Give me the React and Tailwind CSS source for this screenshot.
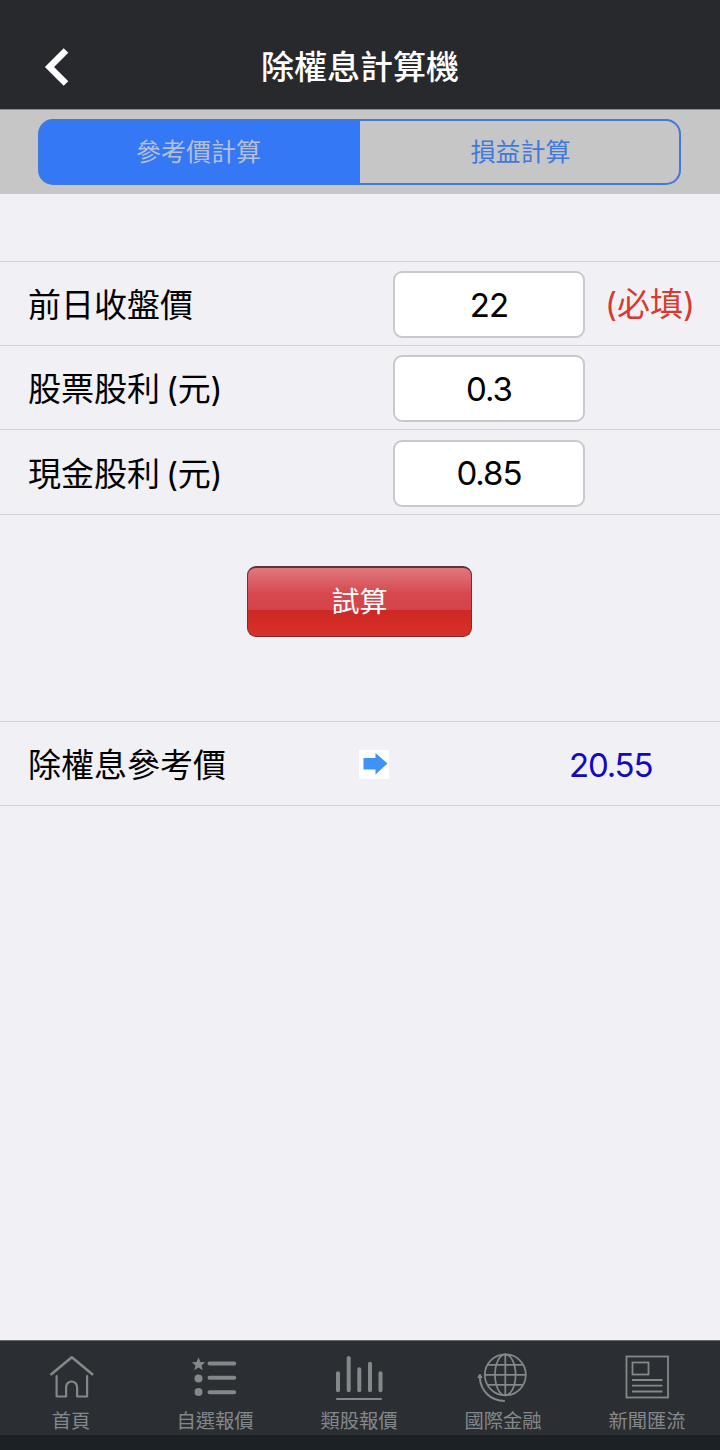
import React, { useState } from 'react';

const HomeIcon = () => (
  <svg width="48" height="48" viewBox="-1 0 48 48" fill="none" stroke="#85888a" strokeLinecap="round" strokeLinejoin="round">
    <path d="M3.500 22.300 24 5.200 44.500 22.300" strokeWidth="2.500" transform="translate(-.2 0)" />
    <path d="M9 24V44.500H18.500V35a5.500 5.500 0 0 1 11 0V44.500H39.500V24" strokeWidth="2.200" transform="translate(-.4 0)" />
  </svg>
);

const WatchlistIcon = () => (
  <svg width="48" height="48" viewBox="0 0 48 48" fill="#85888a">
    <path d="M7.500 5.200 9.400 9.900 14.200 10.300 10.500 13.500 11.700 18.200 7.500 15.600 3.300 18.200 4.500 13.500 .8 10.300 5.600 9.900Z" />
    <circle cx="7.500" cy="26.500" r="4" />
    <circle cx="7.500" cy="40" r="4" />
    <path d="M18.500 11.500H43.200M18.500 25.800H43.200M18.500 40.300H43.200" stroke="#85888a" strokeWidth="4" strokeLinecap="round" />
  </svg>
);

const SectorIcon = () => (
  <svg width="48" height="48" viewBox="0 0 48 48" fill="none" stroke="#85888a" strokeLinecap="round">
    <path d="M3 21.300V38.200M13.700 6V38.200M24.300 17.300V38.200M35 11.700V38.200M45.500 21.300V38.200" strokeWidth="4" />
    <path d="M2 47H46" strokeWidth="2" />
  </svg>
);

const GlobeIcon = () => (
  <svg width="52" height="52" viewBox="0.7 0 52 52" fill="none" stroke="#85888a" strokeWidth="1.700">
    <circle cx="29" cy="24.800" r="20.500" />
    <ellipse cx="29" cy="24.800" rx="10.300" ry="20.500" />
    <path d="M29 4.300V45.300M8.500 24.800H49.500M11.500 14.800H46.500M11.500 34.800H46.500" />
    <path d="M3.500 27.500C4.500 41 14 51 28.500 51" strokeWidth="2" />
    <path d="M1.500 27.500 3.500 24 5.800 27.500Z" fill="#85888a" strokeWidth="1" />
  </svg>
);

const NewsIcon = () => (
  <svg width="48" height="48" viewBox="0 0 48 48" fill="none" stroke="#85888a" strokeWidth="1.800">
    <rect x="3.500" y="4.500" width="41.500" height="41" />
    <rect x="9.500" y="10.500" width="16" height="12" />
    <path d="M9 28H39.500M9 33.700H39.500M9 39.500H39.500" />
  </svg>
);

const tabs = [
  { label: '首頁', Icon: HomeIcon },
  { label: '自選報價', Icon: WatchlistIcon },
  { label: '類股報價', Icon: SectorIcon },
  { label: '國際金融', Icon: GlobeIcon },
  { label: '新聞匯流', Icon: NewsIcon },
];

const fields = [
  { key: 'close', label: '前日收盤價', required: true, height: 'h-[84px]' },
  { key: 'stock', label: '股票股利', unit: '元', height: 'h-[84px]' },
  { key: 'cash', label: '現金股利', unit: '元', height: 'h-[85px]' },
];

const App = () => {
  const [values, setValues] = useState({ close: '22', stock: '0.3', cash: '0.85' });
  const [result, setResult] = useState('20.55');

  const calculate = () => {
    const price = (Number(values.close) - Number(values.cash)) / (1 + Number(values.stock) / 10);
    setResult(price.toFixed(2));
  };

  return (
    <div className="flex flex-col w-[720px] h-[1450px] overflow-hidden bg-[#f0f0f5] text-black font-[Inter,'Noto_Sans_CJK_TC',sans-serif]">
      {/* Header */}
      <header className="grid grid-cols-[1fr_auto_1fr] items-center h-[109px] pt-[25px] shrink-0 bg-[#28292d]">
        <button className="ml-[44px] w-7 h-10" aria-label="返回">
          <svg width="26" height="40" viewBox="0 0 26 40" fill="none" stroke="white" strokeWidth="6.500">
            <path d="M22 3.500 5.500 20 22 36.500" />
          </svg>
        </button>
        <h1 className="text-[33px] leading-[48px] font-medium text-white">除權息計算機</h1>
      </header>

      {/* Segmented control */}
      <div className="h-[85px] shrink-0 bg-[#c6c6c6] border-t border-[#8d8d8e] pt-[9px] pl-[38px]">
        <div className="grid grid-cols-[320px_1fr] w-[643px] h-[66px] rounded-[15px] border-2 border-[#3f79dc] bg-[linear-gradient(to_right,#3478f6_320px,transparent_320px)] overflow-hidden text-[25px]">
          <button className="pt-[2px] pr-[3px] text-[#b4bfd8]">參考價計算</button>
          <button className="pt-[2px] pl-[2px] text-[#3f79dc]">損益計算</button>
        </div>
      </div>

      {/* Inputs */}
      <div className="mt-[67px] border-t border-[#d3d3d7]">
        {fields.map(({ key, label, unit, required, height }) => (
          <div key={key} className={`flex items-center pl-7 border-b border-[#d3d3d7] ${height}`}>
            <label htmlFor={key} className="w-[365px] pt-[3px] text-[33px] leading-[48px] whitespace-nowrap">
              {label}
              {unit && <span className="ml-[6px] tracking-[-0.3px]">({unit})</span>}
            </label>
            <input
              id={key}
              value={values[key]}
              onChange={e => setValues({ ...values, [key]: e.target.value })}
              className="w-[192px] h-[67px] mt-[2px] rounded-[9px] border-2 border-[#c9c9cc] bg-white text-center text-[33px] tracking-[-1px]"
            />
            {required && <span className="ml-[20px] text-[33px] leading-[48px] text-[#d83a30]">(必填)</span>}
          </div>
        ))}
      </div>

      <button
        onClick={calculate}
        className="mt-[51px] ml-[247px] w-[225px] h-[71px] shrink-0 rounded-[9px] border border-[#713036] border-t-2 border-t-[#5d3539] bg-[linear-gradient(to_bottom,#df797f_0%,#d6484e_38%,#d4444a_61%,#cd2824_62%,#d83128_100%)] text-[28px] text-white"
      >
        試算
      </button>

      {/* Result */}
      <div className="flex items-center mt-[84px] h-[85px] shrink-0 pl-7 border-y border-[#d3d3d7]">
        <span className="w-[331px] pt-[2px] text-[33px] leading-[48px]">除權息參考價</span>
        <svg width="30" height="29" viewBox="0 0 30 29" className="mt-[2px] bg-white">
          <path d="M4.500 8H16.500V3L28.500 13.500 16.500 24.500V19.500H4.500Z" fill="#3d94f6" />
        </svg>
        <span className="ml-[180px] pt-[2px] text-[33px] leading-[48px] tracking-[-1.2px] text-[#1409bd]">{result}</span>
      </div>

      {/* Tab bar */}
      <nav className="mt-auto h-[110px] shrink-0 flex flex-col border-t border-[#666a6c] bg-[#2b2f33]">
        <div className="grid grid-cols-5 -ml-px mr-px h-[94px]">
          {tabs.map(({ label, Icon }) => (
            <button key={label} className="flex flex-col items-center pt-[9px] text-[#85888a]">
              <span className="flex items-center justify-center h-[52px]">
                <Icon />
              </span>
              <span className="mt-[5px] text-[19.300px] leading-7 whitespace-nowrap">{label}</span>
            </button>
          ))}
        </div>
        <div className="grow bg-[#1c2125]"></div>
      </nav>
    </div>
  );
};

export default App;
